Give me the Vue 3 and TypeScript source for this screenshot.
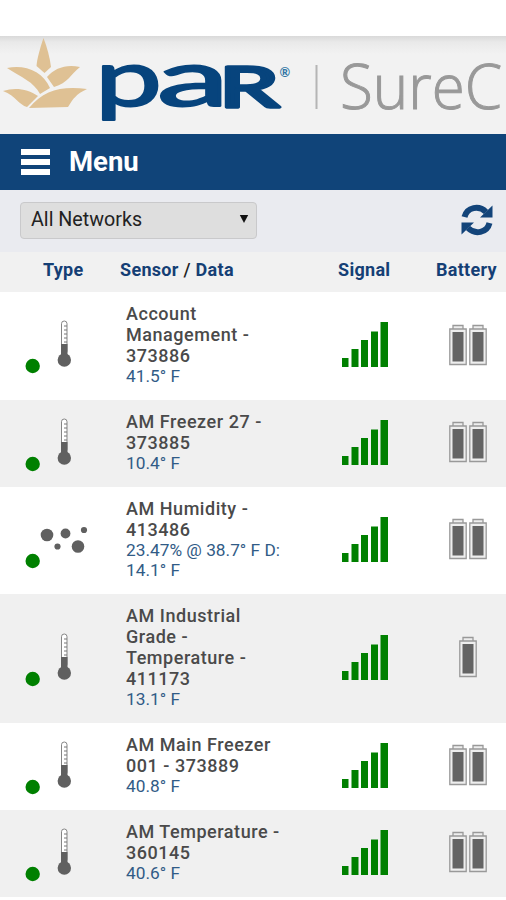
<script setup lang="ts">
interface Sensor {
  kind: 'temperature' | 'humidity'
  name: string[]
  data: string[]
  batteries: number
}

const sensors: Sensor[] = [
  { kind: 'temperature', name: ['Account', 'Management -', '373886'], data: ['41.5° F'], batteries: 2 },
  { kind: 'temperature', name: ['AM Freezer 27 -', '373885'], data: ['10.4° F'], batteries: 2 },
  { kind: 'humidity', name: ['AM Humidity -', '413486'], data: ['23.47% @ 38.7° F D:', '14.1° F'], batteries: 2 },
  { kind: 'temperature', name: ['AM Industrial', 'Grade -', 'Temperature -', '411173'], data: ['13.1° F'], batteries: 1 },
  { kind: 'temperature', name: ['AM Main Freezer', '001 - 373889'], data: ['40.8° F'], batteries: 2 },
  { kind: 'temperature', name: ['AM Temperature -', '360145'], data: ['40.6° F'], batteries: 2 },
]
</script>

<template>
  <main class="screen">
    <header class="brand">
      <svg class="logo" width="506" height="97" viewBox="0 36 506 97">
        <g fill="#dfc194">
          <path d="M43.500 38C40 48 37 59 36.500 66L44.500 73L51 67C50 58 47 47 43.500 38Z" />
          <path d="M7 68C24 64 43 71 50 88L40 94C34 82 21 77 7 68Z" />
          <path d="M47 77C55 68 66 64 80 67C71 74 68 83 54 87Z" />
          <path d="M3 91C15 87 28 89 38 96L27 107C19 105 16 96 3 91Z" />
          <path d="M29 108C44 90 61 86 87 89C76 94 73 99 68 107Z" />
        </g>
        <g class="wordmark">
          <text class="lower" x="95" y="106" textLength="67" lengthAdjust="spacingAndGlyphs">p</text>
          <text class="lower" x="157" y="106" textLength="72" lengthAdjust="spacingAndGlyphs">a</text>
          <text class="upper" x="219" y="106.500" textLength="60" lengthAdjust="spacingAndGlyphs">R</text>
        </g>
        <text class="registered" x="279.500" y="77">®</text>
        <path d="M316.500 65V109" stroke="#b5b5b5" stroke-width="2" />
        <text class="product" x="340" y="109" textLength="162" lengthAdjust="spacingAndGlyphs">SureC</text>
      </svg>
    </header>

    <nav class="menu">
      <span class="burger"><i></i><i></i><i></i></span>
      <span class="menu-label">Menu</span>
    </nav>

    <section class="toolbar">
      <button class="network">
        <span>All Networks</span>
        <svg width="10" height="10" viewBox="0 0 10 10"><path d="M.8 1H9.200L5 9Z" fill="#111" /></svg>
      </button>
      <svg class="refresh" width="32" height="32" viewBox="0 0 32 32">
        <g fill="none" stroke="#13447a" stroke-width="6">
          <path d="M3.500 13C6 3 18 1 25 8" />
          <path d="M28.500 19C26 29 14 31 7 24" />
        </g>
        <path d="M31.500 1.500V13.500H19ZM.5 30.500V18.500H13Z" fill="#13447a" />
      </svg>
    </section>

    <div class="columns">
      <span class="c-type">Type</span>
      <span class="c-sensor">Sensor <b>/</b> Data</span>
      <span class="c-signal">Signal</span>
      <span class="c-battery">Battery</span>
    </div>

    <article v-for="sensor in sensors" :key="sensor.name.join(' ')" class="row">
      <div class="type">
        <svg width="90" height="56" viewBox="0 0 90 56">
          <circle cx="32.700" cy="46" r="7.200" fill="#008000" />
          <g v-if="sensor.kind === 'temperature'">
            <rect x="61.500" y="1" width="5.500" height="33" rx="2.700" fill="#fff" stroke="#858585" />
            <path d="M64 6H67M64 10H67M64 14H67M64 18H67M64 22H67" stroke="#777" />
            <path d="M61 24H67.500V35H61Z" fill="#606060" />
            <circle cx="64.300" cy="40" r="6.700" fill="#606060" />
          </g>
          <g v-else fill="#606060">
            <circle cx="47" cy="20" r="6.300" />
            <circle cx="65.500" cy="18.500" r="4.900" />
            <circle cx="84" cy="15" r="3.100" />
            <circle cx="57.500" cy="31.500" r="3.100" />
            <circle cx="78" cy="31.500" r="6.300" />
          </g>
        </svg>
      </div>
      <div class="details">
        <div v-for="line in sensor.name" :key="line" class="name">{{ line }}</div>
        <div v-for="line in sensor.data" :key="line" class="reading">{{ line }}</div>
      </div>
      <div class="signal">
        <svg width="46" height="46" viewBox="0 0 46 46" fill="#008000">
          <path d="M0 37H6.500V46H0ZM9.500 28H16.500V46H9.500ZM19 19H26V46H19ZM29 10.500H36V46H29ZM38.500 1H46V46H38.500Z" />
        </svg>
      </div>
      <div class="battery">
        <svg v-for="n in sensor.batteries" :key="n" width="20" height="42" viewBox="0 0 20 42">
          <path d="M5 5V1.500H15V5M1.800 5H18.200V40.500H1.800Z" fill="#eee" stroke="#999" stroke-width="1.300" />
          <rect x="4.500" y="8" width="11" height="29.500" fill="#646464" />
        </svg>
      </div>
    </article>
  </main>
</template>

<style>
body { margin: 0; background: #fff; }
</style>

<style scoped>
.screen {
  width: 506px;
  height: 900px;
  padding-top: 36px;
  box-sizing: border-box;
  overflow: hidden;
  background: #fff;
  font-family: Roboto, sans-serif;
}
.brand {
  height: 98px;
  background: linear-gradient(#d9d9d9, #e9e9e9 6px, #f2f2f2 18px);
}
.logo { display: block; overflow: visible; }
.wordmark { fill: #07447d; stroke: #07447d; stroke-linejoin: round; font-family: Lato, sans-serif; }
.lower { font-size: 80px; font-weight: 400; stroke-width: 2px; }
.upper { font-size: 56px; font-weight: 400; stroke-width: 3.500px; }
.registered { font: 700 13px Lato, sans-serif; fill: #3276a5; }
.product { font: 300 62px "Open Sans", sans-serif; fill: #999; stroke: #999; stroke-width: 1px; }
.menu {
  display: flex;
  align-items: center;
  gap: 19px;
  height: 56px;
  padding: 0 21px;
  box-sizing: border-box;
  background: #104479;
  color: #fff;
}
.burger { display: flex; flex-direction: column; gap: 4px; width: 29px; }
.burger i { height: 6px; background: #fff; }
.menu-label { font-size: 27.500px; font-weight: 700; line-height: 56px; }
.toolbar {
  display: flex;
  align-items: center;
  justify-content: space-between;
  height: 62px;
  padding: 0 13px 2px 20px;
  box-sizing: border-box;
  background: #eaebf0;
}
.network {
  display: flex;
  align-items: center;
  justify-content: space-between;
  width: 237px;
  height: 37px;
  padding: 0 7px 2px 10px;
  box-sizing: border-box;
  border: 1px solid #c9c9cb;
  border-radius: 4px;
  background: #dedede;
  color: #222;
  font: 19.700px Roboto, sans-serif;
}
.columns, .row {
  display: grid;
  grid-template-columns: 120px 190px 110px 86px;
}
.columns {
  height: 40px;
  background: #f1f1f1;
  color: #153f75;
  font-size: 18px;
  font-weight: 700;
  line-height: 36px;
  letter-spacing: .3px;
}
.columns b { color: #222; font-weight: 500; }
.c-type { padding-left: 43px; }
.c-signal { padding-left: 28px; }
.c-battery { padding-left: 16px; }
.row { align-items: center; background: #fff; }
.row:nth-of-type(even) { background: #f0f0f0; }
.type { height: 56px; padding-bottom: 3px; }
.row:first-of-type .type, .row:first-of-type .signal { padding-bottom: 5px; }
.type svg { display: block; margin-top: 4px; }
.details { padding: 11px 0 14px 6px; white-space: nowrap; }
.name { font-size: 18px; font-weight: 500; line-height: 21px; letter-spacing: .54px; color: #4a4a4a; }
.reading { font-size: 17.300px; line-height: 20px; color: #315b86; }
.signal { padding: 0 0 3px 32px; }
.signal svg { display: block; }
.battery { display: flex; justify-content: center; padding: 0 0 3px 10px; }
</style>
